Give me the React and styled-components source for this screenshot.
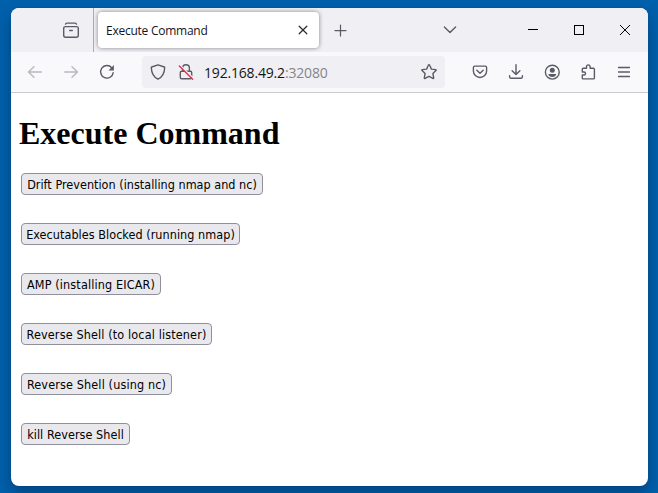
import React from 'react';
import styled, { createGlobalStyle } from 'styled-components';

const GlobalStyle = createGlobalStyle`
  * { box-sizing: border-box; }
  html, body { margin: 0; padding: 0; overflow: hidden; }
`;

const Desktop = styled.div`
  width: 658px;
  height: 493px;
  padding: 8px 10px 7px 11px;
  background: #0060ab;
  overflow: hidden;
`;

const BrowserWindow = styled.main`
  display: flex;
  flex-direction: column;
  width: 637px;
  height: 478px;
  border-radius: 8px;
  overflow: hidden;
  background: #fff;
  box-shadow: 0 7px 14px rgba(0, 20, 50, 0.36), 0 0 1px rgba(0, 40, 90, 0.5);
`;

const TabBar = styled.header`
  display: flex;
  align-items: center;
  flex: none;
  height: 44px;
  background: #f0eff4;
`;

const TabManager = styled.div`
  display: flex;
  justify-content: flex-end;
  align-items: center;
  width: 83px;
  height: 44px;
  padding-right: 14px;
  border-right: 1px solid #adacb3;
`;

const Tab = styled.div`
  display: flex;
  align-items: center;
  justify-content: space-between;
  width: 221px;
  height: 36px;
  margin-left: 4px;
  padding: 0 8px 0 8px;
  border-radius: 4px;
  background: #fff;
  box-shadow: 0 0 4px rgba(70, 70, 80, 0.65);
`;

const TabTitle = styled.span`
  padding-top: 2px;
  font: 12px/16px "Open Sans", "Noto Sans", sans-serif;
  letter-spacing: -0.25px;
  color: #15141a;
  white-space: nowrap;
`;

const Cell = styled.div`
  display: flex;
  align-items: center;
  justify-content: center;
  flex: none;
  width: ${(p) => p.$width || 36}px;
  height: 36px;
  margin-left: ${(p) => p.$gap || 0}px;
  color: ${(p) => p.$color || '#5b5b66'};
`;

const NavBar = styled.nav`
  display: flex;
  align-items: center;
  flex: none;
  height: 41px;
  padding-left: 6px;
  background: #f9f9fb;
  border-bottom: 1px solid #cccccf;
`;

const AddressBar = styled.div`
  display: flex;
  align-items: center;
  width: 303px;
  height: 32px;
  margin-left: 17px;
  border-radius: 4px;
  background: #f0f0f4;
`;

const Address = styled.span`
  flex: 1;
  margin-left: 4px;
  padding-top: 2px;
  font: 14px/20px "Open Sans", "Noto Sans", sans-serif;
  letter-spacing: -0.18px;
  color: #15141a;
  white-space: nowrap;
`;

const Port = styled.span`
  color: #85858c;
`;

const Page = styled.section`
  flex: 1;
  padding: 21px 8px 0;
`;

const Heading = styled.h1`
  margin: 0 0 20px;
  font: bold 32px/39px "Liberation Serif", serif;
  color: #000;
`;

const Commands = styled.div`
  display: flex;
  flex-direction: column;
  align-items: flex-start;
  gap: 28px;
  padding-left: 2px;
`;

const CommandButton = styled.button`
  width: ${(p) => p.$width}px;
  height: 22px;
  margin: 0;
  padding: 1px 0 0;
  border: 1px solid #8f8f9d;
  border-radius: 4px;
  background: #e9e9ed;
  color: #000;
  font: 12.5px/19px "DejaVu Sans Condensed", "DejaVu Sans", sans-serif;
  font-stretch: condensed;
  letter-spacing: ${(p) => p.$tracking || 0}px;
  white-space: nowrap;
`;

const Svg = styled.svg`
  display: block;
  flex: none;
  fill: none;
  stroke: currentColor;
  stroke-width: ${(p) => p.$stroke || 1.4};
  stroke-linecap: round;
  stroke-linejoin: round;
`;

const Icon = ({ size = 16, stroke, children, ...rest }) => (
  <Svg width={size} height={size} viewBox={`0 0 ${size} ${size}`} $stroke={stroke} {...rest}>{children}</Svg>
);

const ArchiveIcon = () => (
  <Icon><path d="M2.500 2.100Q2.800 1.100 3.800 1.100h8.400q1 0 1.300 1M2.400 4.600h11.200q1.700 0 1.700 1.700v7q0 1.900-1.900 1.900H2.600Q.7 15.200.7 13.300v-7Q.7 4.600 2.400 4.600M6.700 8.500h2.600" /></Icon>
);
const TabCloseIcon = () => (
  <Icon size={10} stroke={1.25}><path d="M1.200 1.200l7.600 7.600M8.800 1.200L1.200 8.800" stroke="#2b2a33" /></Icon>
);
const PlusIcon = () => <Icon stroke={1.25}><path d="M8.500 3v11M3 8.500h11" /></Icon>;
const ChevronIcon = () => <Icon><path d="M2.400 5L8 10.500 13.600 5" /></Icon>;
const MinimizeIcon = () => <Icon size={10} stroke={1} shapeRendering="crispEdges"><path d="M0 4.500h10" /></Icon>;
const MaximizeIcon = () => <Icon size={10} stroke={1} shapeRendering="crispEdges"><path d="M.5.5h9v9h-9z" /></Icon>;
const CloseIcon = () => <Icon size={10} stroke={1}><path d="M.2.2l9.600 9.600M9.800.2L.2 9.800" /></Icon>;
const BackIcon = () => <Icon><path d="M14.300 8H1.500M7 2.700L1.500 8 7 13.300" /></Icon>;
const ForwardIcon = () => <Icon><path d="M1.700 8h12.800M9 2.700L14.500 8 9 13.300" /></Icon>;
const ReloadIcon = () => (
  <Icon>
    <path d="M12.700 3.700A6.300 6.300 0 1 0 14.200 8.600" />
    <path d="M14.900 1v5.400H9.500z" fill="currentColor" stroke="none" />
  </Icon>
);
const ShieldIcon = () => (
  <Icon><path d="M8 .8L14.300 3q.4.200.4.700C14.500 8.800 12.500 13 8 15.200 3.500 13 1.500 8.800 1.300 3.700q0-.5.4-.7z" /></Icon>
);
const LockOffIcon = () => (
  <Icon>
    <path d="M4.600 7V4.100a3.400 3.400 0 0 1 6.800 0V7M3.600 7.300h8.800q1.300 0 1.300 1.300v4.800q0 1.400-1.400 1.400H3.700q-1.400 0-1.400-1.400V8.600q0-1.300 1.300-1.300z" />
    <path d="M2 1.200l13.500 13" stroke="#f0f0f4" />
    <path d="M1.300 1.900l13.300 13.300" stroke="#e9304f" />
  </Icon>
);
const StarIcon = () => (
  <Icon><path d="M8 .8q.5 0 .7.500l1.700 3.800 4.200.5q1 .2.300 1l-3 2.900.8 4.300q.1 1-.8.600L8 12.300l-3.900 2.100q-.9.400-.8-.6l.8-4.300-3-2.900q-.7-.8.300-1l4.200-.5 1.700-3.800q.2-.5.700-.5z" /></Icon>
);
const PocketIcon = () => (
  <Icon>
    <path d="M2.700 2.100h10.600q1.300 0 1.300 1.300v3.500a6.600 6.600 0 0 1-13.200 0V3.400q0-1.300 1.300-1.300z" />
    <path d="M4.800 6.200L8 9.300l3.200-3.100" />
  </Icon>
);
const DownloadIcon = () => (
  <Icon><path d="M8 .7v9.800M4.100 6.700L8 10.600l3.900-3.900M1.600 11.600v1.100q0 1.600 1.600 1.600h9.600q1.600 0 1.600-1.600v-1.100" /></Icon>
);
const AccountIcon = () => (
  <Icon>
    <circle cx="8.300" cy="8.200" r="6.900" />
    <circle cx="8.300" cy="6.200" r="2.500" fill="currentColor" stroke="none" />
    <path d="M4.300 9.900h8q-.6 3-4 3t-4-3z" fill="currentColor" stroke="none" />
  </Icon>
);
const ExtensionIcon = () => (
  <Icon>
    <path d="M2.300 8V5.300q0-1 1-1h3.200V2.700a1.800 1.800 0 0 1 3.600 0v1.600h3.300q1 0 1 1v8.600q0 1-1 1H3.300q-1 0-1-1V11H4a1.500 1.500 0 0 0 0-3z" />
  </Icon>
);
const MenuIcon = () => <Icon stroke={1.3}><path d="M2.500 3.500h11M2.500 8h11M2.500 12.500h11" /></Icon>;

const commands = [
  { label: 'Drift Prevention (installing nmap and nc)', width: 242, tracking: 0.02 },
  { label: 'Executables Blocked (running nmap)', width: 219, tracking: 0.05 },
  { label: 'AMP (installing EICAR)', width: 140, tracking: 0.14 },
  { label: 'Reverse Shell (to local listener)', width: 191, tracking: 0.14 },
  { label: 'Reverse Shell (using nc)', width: 151, tracking: 0.14 },
  { label: 'kill Reverse Shell', width: 109, tracking: 0.06 },
];

export default function App() {
  return (
    <Desktop>
      <GlobalStyle />
      <BrowserWindow>
        <TabBar>
          <TabManager><Cell $width={16}><ArchiveIcon /></Cell></TabManager>
          <Tab>
            <TabTitle>Execute Command</TabTitle>
            <Cell $width={16}><TabCloseIcon /></Cell>
          </Tab>
          <Cell $gap={3}><PlusIcon /></Cell>
          <Cell $gap={74}><ChevronIcon /></Cell>
          <Cell $gap={42} $width={46} $color="#000"><MinimizeIcon /></Cell>
          <Cell $width={46} $color="#000"><MaximizeIcon /></Cell>
          <Cell $width={46} $color="#000"><CloseIcon /></Cell>
        </TabBar>
        <NavBar>
          <Cell $color="#b9b9bf"><BackIcon /></Cell>
          <Cell $color="#b9b9bf"><ForwardIcon /></Cell>
          <Cell><ReloadIcon /></Cell>
          <AddressBar>
            <Cell $width={28} $gap={2}><ShieldIcon /></Cell>
            <Cell $width={28}><LockOffIcon /></Cell>
            <Address>192.168.49.2<Port>:32080</Port></Address>
            <Cell $width={32}><StarIcon /></Cell>
          </AddressBar>
          <Cell $gap={17}><PocketIcon /></Cell>
          <Cell><DownloadIcon /></Cell>
          <Cell><AccountIcon /></Cell>
          <Cell><ExtensionIcon /></Cell>
          <Cell><MenuIcon /></Cell>
        </NavBar>
        <Page>
          <Heading>Execute Command</Heading>
          <Commands>
            {commands.map(({ label, width, tracking }) => (
              <CommandButton key={label} $width={width} $tracking={tracking}>{label}</CommandButton>
            ))}
          </Commands>
        </Page>
      </BrowserWindow>
    </Desktop>
  );
}
